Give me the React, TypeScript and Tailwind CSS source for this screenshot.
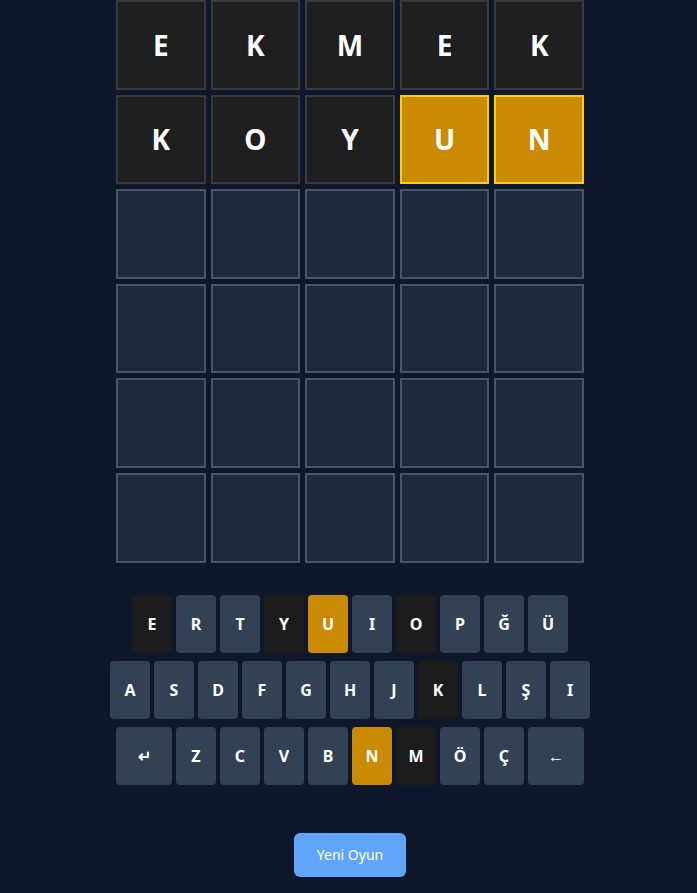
import React from "react"

type Mark = "dark" | "yellow" | "none"

const board: { letter: string; mark: Mark }[][] = [
  [
    { letter: "E", mark: "dark" },
    { letter: "K", mark: "dark" },
    { letter: "M", mark: "dark" },
    { letter: "E", mark: "dark" },
    { letter: "K", mark: "dark" },
  ],
  [
    { letter: "K", mark: "dark" },
    { letter: "O", mark: "dark" },
    { letter: "Y", mark: "dark" },
    { letter: "U", mark: "yellow" },
    { letter: "N", mark: "yellow" },
  ],
]

const keyRows = [
  ["E", "R", "T", "Y", "U", "I", "O", "P", "Ğ", "Ü"],
  ["A", "S", "D", "F", "G", "H", "J", "K", "L", "Ş", "I"],
  ["ENTER", "Z", "C", "V", "B", "N", "M", "Ö", "Ç", "BACK"],
]

const keyMarks: Record<string, Mark> = {
  E: "dark",
  Y: "dark",
  O: "dark",
  K: "dark",
  M: "dark",
  U: "yellow",
  N: "yellow",
}

function Tile({ letter, mark }: { letter?: string; mark: Mark }) {
  const style =
    mark === "dark"
      ? "bg-[#1f1f1f] border-[#3a3a3a]"
      : mark === "yellow"
        ? "bg-[#ca8a04] border-[#facc15]"
        : "bg-[#1e293b] border-[#475569]"
  return (
    <div className={`aspect-square border-2 flex items-center justify-center text-white font-bold text-[28px] ${style}`}>
      {letter}
    </div>
  )
}

function Key({ k }: { k: string }) {
  const mark = keyMarks[k] ?? "none"
  const bg = mark === "dark" ? "bg-[#1c1c1c]" : mark === "yellow" ? "bg-[#ca8a04]" : "bg-[#334155]"
  const wide = k === "ENTER" || k === "BACK"
  const label = k === "ENTER" ? "↵" : k === "BACK" ? "←" : k
  return (
    <button
      className={`${wide ? "w-[56px]" : "w-[40px]"} h-[58px] rounded ${bg} text-white font-bold text-base flex items-center justify-center`}
    >
      {label}
    </button>
  )
}

export default function App() {
  const rows = Array.from({ length: 6 }, (_, r) => board[r] ?? Array.from({ length: 5 }, () => ({ letter: "", mark: "none" as Mark })))

  return (
    <div className="min-h-[893px] bg-[#0f172a] pl-[3px] flex flex-col items-center font-['Noto_Sans',sans-serif]">
      <div className="w-[468px] grid grid-cols-5 gap-[5px]">
        {rows.map((row, r) =>
          row.map((t, c) => <Tile key={`${r}-${c}`} letter={t.letter} mark={t.mark} />)
        )}
      </div>

      <div className="mt-[32px] flex flex-col items-center gap-2">
        {keyRows.map((row, i) => (
          <div key={i} className="flex gap-1">
            {row.map((k, j) => (
              <Key key={`${k}-${j}`} k={k} />
            ))}
          </div>
        ))}
      </div>

      <button className="mt-12 w-[112px] py-3 rounded-md bg-[#60a5fa] text-white text-sm text-center">Yeni Oyun</button>
    </div>
  )
}
